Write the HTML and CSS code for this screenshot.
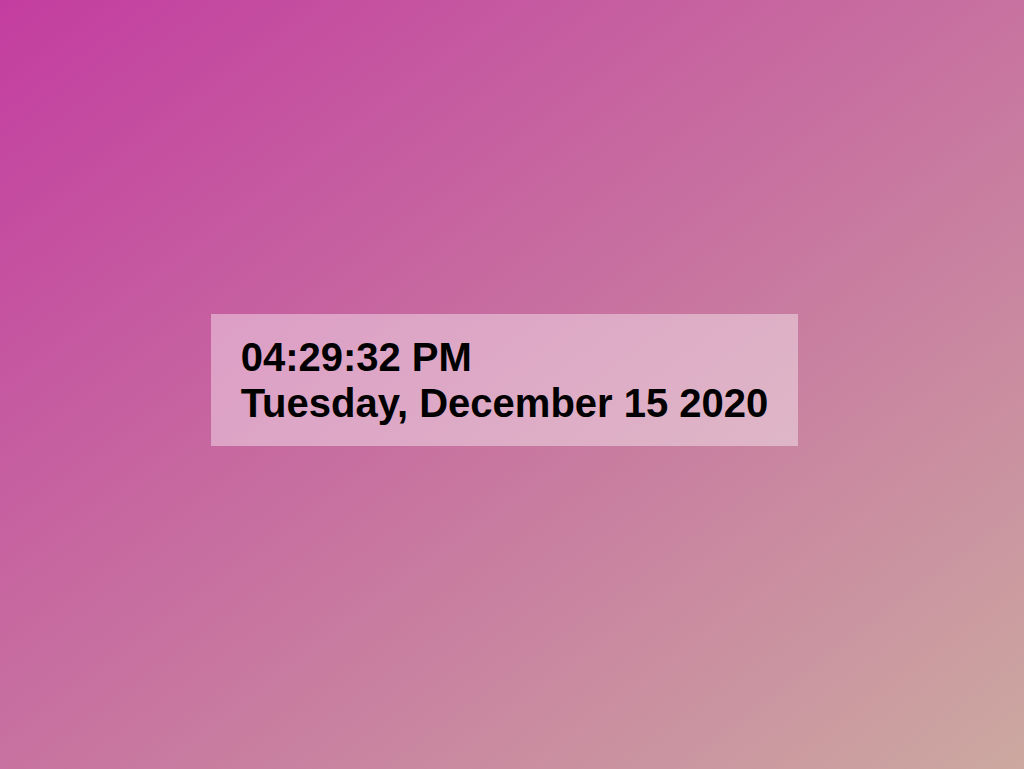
FILE: index.html
```html
<!DOCTYPE html>
<html>
<head>
<meta charset="utf-8">
<link rel="stylesheet" href="styles.css">
</head>
<body>
<main class="stage">
  <div class="clock">
    <div class="time">04:29:32 PM</div>
    <div class="date">Tuesday, December 15 2020</div>
  </div>
</main>
</body>
</html>
```
FILE: styles.css
```css
html, body {
  margin: 0;
  padding: 0;
  height: 100%;
}
body {
  background: linear-gradient(to bottom right, #c33da0, #cca8a0);
  font-family: "Liberation Sans", Arial, sans-serif;
}
.stage {
  box-sizing: border-box;
  height: 769px;
  display: flex;
  align-items: center;
  justify-content: center;
  padding: 0 15px 9px 0;
}
.clock {
  background: rgba(255, 255, 255, 0.4);
  padding: 20px 30px;
  font-size: 40px;
  line-height: 46px;
  font-weight: bold;
  color: #000;
}
```
